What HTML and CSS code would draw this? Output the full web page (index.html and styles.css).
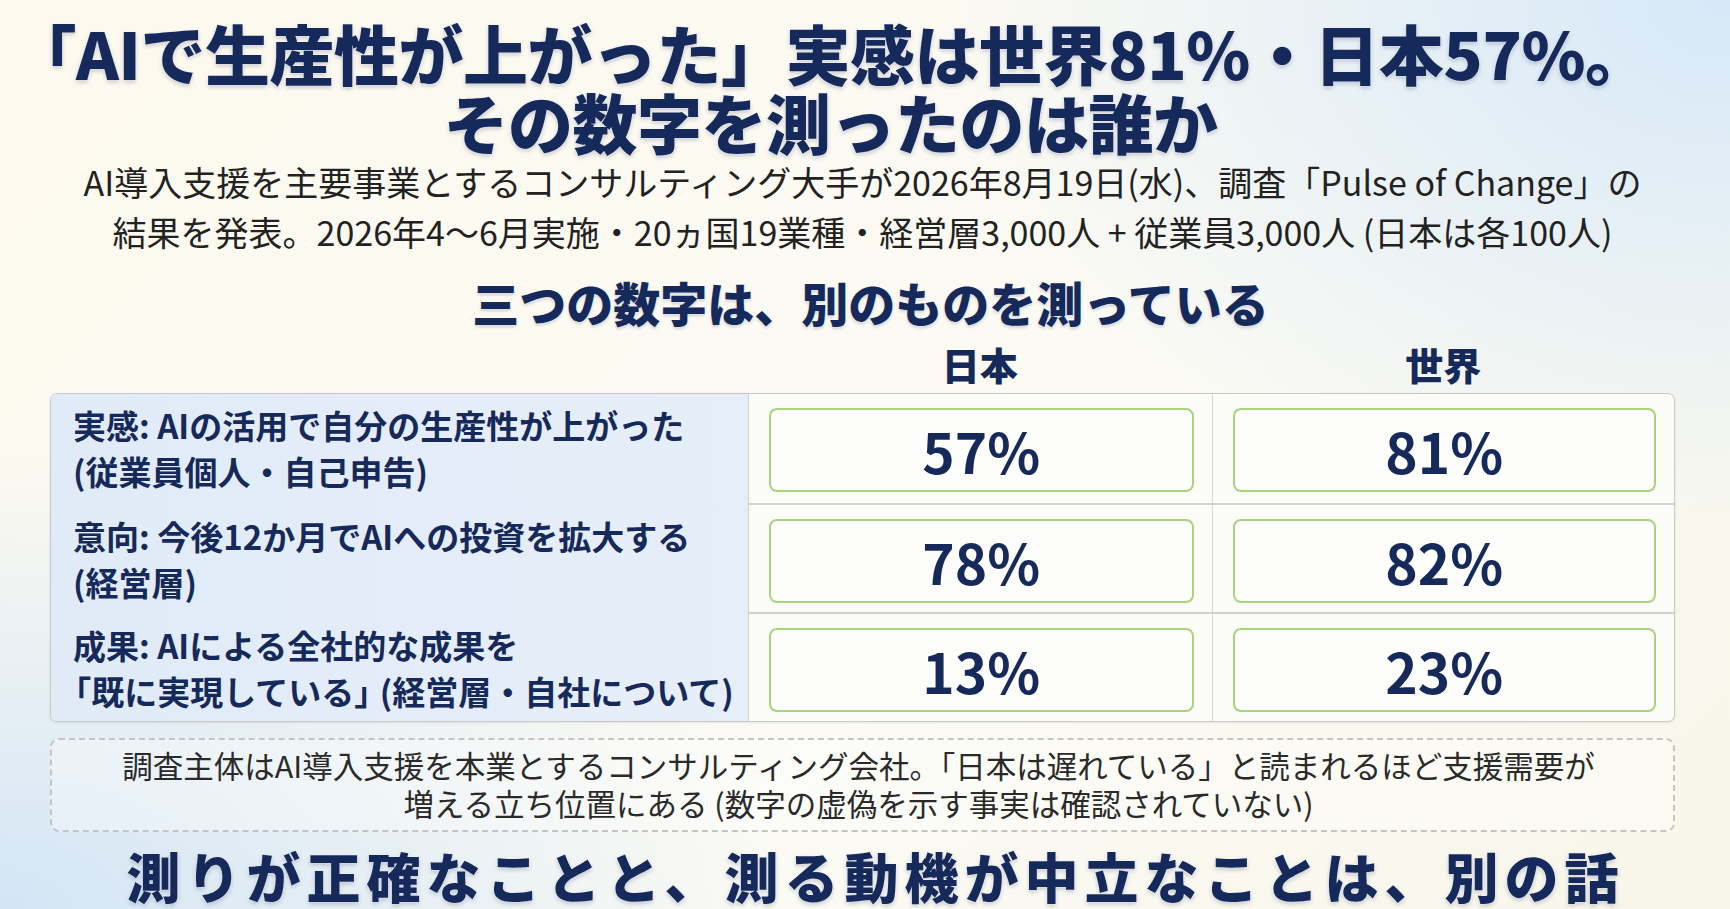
FILE: index.html
```html
<!DOCTYPE html>
<html lang="ja">
<head>
<meta charset="utf-8">
<title>AI生産性の実感</title>
<link rel="stylesheet" href="styles.css">
</head>
<body>
<main class="page">
  <h1 class="title">
    <span class="title-line">「AIで生産性が上がった」実感は世界81%・日本57%。</span>
    <span class="title-line">その数字を測ったのは誰か</span>
  </h1>
  <p class="lead">AI導入支援を主要事業とするコンサルティング大手が2026年8月19日(水)、調査「Pulse of Change」の<br>結果を発表。2026年4〜6月実施・20ヵ国19業種・経営層3,000人 + 従業員3,000人 (日本は各100人)</p>
  <h2 class="section-title">三つの数字は、別のものを測っている</h2>
  <div class="col-heads">
    <div></div>
    <div class="col-head">日本</div>
    <div class="col-head">世界</div>
  </div>
  <div class="table">
    <div class="row">
      <div class="label">実感: AIの活用で自分の生産性が上がった<br>(従業員個人・自己申告)</div>
      <div class="cell"><div class="val">57%</div></div>
      <div class="cell"><div class="val">81%</div></div>
    </div>
    <div class="row">
      <div class="label">意向: 今後12か月でAIへの投資を拡大する<br>(経営層)</div>
      <div class="cell"><div class="val">78%</div></div>
      <div class="cell"><div class="val">82%</div></div>
    </div>
    <div class="row">
      <div class="label">成果: AIによる全社的な成果を<br><span class="open">「</span>既に実現している<span class="close">」</span> (経営層・自社について)</div>
      <div class="cell"><div class="val">13%</div></div>
      <div class="cell"><div class="val">23%</div></div>
    </div>
  </div>
  <div class="note">調査主体はAI導入支援を本業とするコンサルティング会社。「日本は遅れている」と読まれるほど支援需要が<br>増える立ち位置にある (数字の虚偽を示す事実は確認されていない)</div>
  <p class="closing">測りが正確なことと、測る動機が中立なことは、別の話</p>
</main>
</body>
</html>
```

FILE: styles.css
```css
html, body {
  margin: 0;
  padding: 0;
}
body {
  width: 1730px;
  height: 909px;
  overflow: hidden;
  font-family: "Noto Sans CJK JP", "Noto Sans", sans-serif;
  color: #16295a;
  background:
    radial-gradient(ellipse 780px 540px at 100% 0%, #d6e8f8 0%, rgba(214,232,248,0) 100%),
    radial-gradient(ellipse 780px 460px at 0% 100%, #d3e5f6 0%, rgba(211,229,246,0) 100%),
    linear-gradient(135deg, #fdf9ee 0%, #fbfaf4 60%, #f8f6ea 100%);
}
.page {
  display: flex;
  flex-direction: column;
  padding: 18px 55px 0 50px;
}
.title {
  margin: 0;
  padding-right: 64px;
  display: flex;
  flex-direction: column;
  align-items: center;
  font-size: 65px;
  font-weight: 900;
  line-height: 69px;
  letter-spacing: -0.5px;
  white-space: nowrap;
  color: #15295a;
  text-shadow: 0 0 2px #fff, 0 2px 4px rgba(20, 40, 90, 0.25);
}
.lead {
  margin: 1px 0 0;
  text-align: center;
  font-size: 34px;
  line-height: 50px;
  font-weight: 400;
  white-space: nowrap;
  color: #222;
}
.section-title {
  margin: 17px 0 0;
  padding-left: 16px;
  text-align: center;
  font-size: 47px;
  line-height: 56px;
  font-weight: 900;
  color: #15295a;
  text-shadow: 0 0 2px #fff, 0 2px 3px rgba(20, 40, 90, 0.2);
}
.col-heads {
  display: grid;
  grid-template-columns: 698px 1fr 1fr;
  margin-top: 11px;
}
.col-head {
  text-align: center;
  font-size: 38px;
  line-height: 46px;
  font-weight: 900;
  color: #15295a;
}
.table {
  margin-top: 6px;
  border: 1px solid #c9c9c9;
  border-radius: 7px;
  overflow: hidden;
  background: #fbfbf8;
  box-shadow: 0 1px 3px rgba(0, 0, 0, 0.08);
}
.row {
  display: grid;
  grid-template-columns: 698px 1fr 1fr;
  height: 107px;
}
.row:first-child {
  height: 109px;
}
.row + .row {
  border-top: 2px solid #d2d2d2;
}
.label {
  display: block;
  padding: 8px 8px 0 22px;
  background: linear-gradient(90deg, #e1ebf8 0%, #e6eef9 100%);
  border-right: 1px solid #cfcfcf;
  font-size: 33px;
  line-height: 46px;
  font-weight: 700;
  white-space: nowrap;
  color: #15295a;
}
.open {
  margin-left: -0.45em;
}
.close {
  margin-right: -0.45em;
}
.cell {
  display: flex;
  padding: 14px 18px 14px 20px;
}
.cell + .cell {
  border-left: 1px solid #d4d4d4;
}
.val {
  flex: 1;
  display: flex;
  align-items: center;
  justify-content: center;
  border: 2px solid #a9d47f;
  border-radius: 8px;
  background: #fdfdfb;
  font-size: 55px;
  font-weight: 700;
  color: #15295a;
}
.note {
  margin-top: 16px;
  padding: 6px 20px 8px 12px;
  border: 2px dashed #c4c4c4;
  border-radius: 9px;
  text-align: center;
  font-size: 30.5px;
  line-height: 38px;
  white-space: nowrap;
  color: #2a2a2a;
  background: rgba(255, 255, 255, 0.35);
}
.closing {
  margin: 18px 0 0;
  padding-left: 26px;
  text-align: center;
  font-size: 54px;
  line-height: 52px;
  letter-spacing: 6px;
  font-weight: 900;
  white-space: nowrap;
  color: #15295a;
  text-shadow: 0 0 2px #fff, 0 2px 4px rgba(20, 40, 90, 0.25);
}
```
